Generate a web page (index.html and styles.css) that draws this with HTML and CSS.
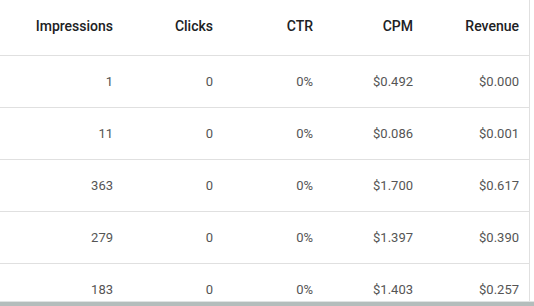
FILE: index.html
```html
<!DOCTYPE html>
<html>
<head>
<meta charset="utf-8">
<link rel="stylesheet" href="styles.css">
</head>
<body>
<div class="page">
  <div class="table">
    <div class="row head">
      <div class="cell">Impressions</div>
      <div class="cell">Clicks</div>
      <div class="cell">CTR</div>
      <div class="cell">CPM</div>
      <div class="cell">Revenue</div>
    </div>
    <div class="row">
      <div class="cell">1</div><div class="cell">0</div><div class="cell">0%</div><div class="cell">$0.492</div><div class="cell">$0.000</div>
    </div>
    <div class="row">
      <div class="cell">11</div><div class="cell">0</div><div class="cell">0%</div><div class="cell">$0.086</div><div class="cell">$0.001</div>
    </div>
    <div class="row">
      <div class="cell">363</div><div class="cell">0</div><div class="cell">0%</div><div class="cell">$1.700</div><div class="cell">$0.617</div>
    </div>
    <div class="row">
      <div class="cell">279</div><div class="cell">0</div><div class="cell">0%</div><div class="cell">$1.397</div><div class="cell">$0.390</div>
    </div>
    <div class="row last">
      <div class="cell">183</div><div class="cell">0</div><div class="cell">0%</div><div class="cell">$1.403</div><div class="cell">$0.257</div>
    </div>
  </div>
  <div class="scrollbar"></div>
</div>
</body>
</html>
```
FILE: styles.css
```css
html, body {
  margin: 0;
  padding: 0;
  background: #ffffff;
}
body {
  font-family: Roboto, "Liberation Sans", sans-serif;
  width: 534px;
  height: 306px;
  overflow: hidden;
}
.page {
  display: flex;
  flex-direction: column;
  height: 306px;
}
.table {
  width: 529px;
  border-right: 1px solid #e0e0e0;
  flex: 1;
  overflow: hidden;
}
.row {
  display: grid;
  grid-template-columns: 123px 100px 100px 100px 106px;
  height: 51px;
  border-bottom: 1px solid #e0e0e0;
  align-items: center;
  font-size: 13px;
  color: #555555;
}
.row.head {
  height: 55px;
  font-size: 14px;
  font-weight: 500;
  color: #202124;
}
.row.last {
  border-bottom: none;
}
.cell {
  text-align: right;
  padding-right: 10px;
}
.head .cell {
  position: relative;
  top: -2px;
}
.scrollbar {
  height: 4px;
  background: #b4bdbc;
  border-top: 1px solid #dfe3e3;
}
```
